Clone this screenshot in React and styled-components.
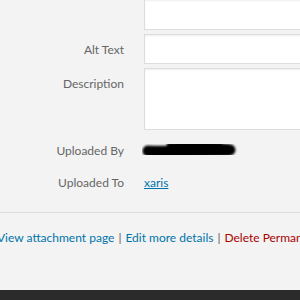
import React from "react";
import styled, { createGlobalStyle } from "styled-components";

const GlobalStyle = createGlobalStyle`
  html, body {
    margin: 0;
    padding: 0;
    background: #f3f3f3;
    overflow: hidden;
  }
  body {
    font-family: "Lato", "Noto Sans", sans-serif;
    font-size: 12px;
  }
`;

const Page = styled.div`
  width: 300px;
  height: 300px;
  display: flex;
  flex-direction: column;
  background: #f3f3f3;
  overflow: hidden;
`;

const Settings = styled.div`
  display: grid;
  grid-template-columns: 124px 200px;
  column-gap: 20px;
  row-gap: 4px;
`;

const Label = styled.label`
  text-align: right;
  color: #666;
  padding-top: ${({ $top }) => $top || 8}px;
  line-height: 16px;
`;

const Field = styled.div`
  box-sizing: border-box;
  height: ${({ $h }) => $h}px;
  background: #fff;
  border: 1px solid #ddd;
  border-top: ${({ $noTop }) => ($noTop ? "0" : "1px solid #ddd")};
  box-shadow: inset 0 1px 2px rgba(0, 0, 0, 0.07);
`;

const InfoRow = styled.div`
  display: grid;
  grid-template-columns: 124px 1fr;
  column-gap: 20px;
  height: 32px;
  align-items: center;
`;

const InfoLabel = styled.span`
  text-align: right;
  color: #666;
`;

const Value = styled.a`
  color: #0073aa;
  text-decoration: underline;
`;

const Info = styled.div`
  padding-top: 4px;
`;

const Divider = styled.hr`
  margin: 14px 0 0;
  border: 0;
  border-top: 1px solid #ddd;
  width: 100%;
`;

const Actions = styled.div`
  padding-top: 16px;
  line-height: 18px;
  white-space: nowrap;
  text-indent: -3px;
`;

const Action = styled.a`
  color: ${({ $danger }) => ($danger ? "#a00" : "#0073aa")};
  text-decoration: none;
`;

const Sep = styled.span`
  color: #555;
  padding: 0 4px;
`;

const Footer = styled.div`
  margin-top: auto;
  height: 10px;
  background: #2b2b2b;
`;

const Redacted = () => (
  <svg width="96" height="18" viewBox="0 0 96 18" style={{ marginLeft: -2 }}>
    <defs>
      <filter id="blur">
        <feGaussianBlur stdDeviation="0.9" />
      </filter>
    </defs>
    <g stroke="#000" strokeLinecap="round" fill="none" filter="url(#blur)">
      <path d="M6 10 C20 11, 35 10, 50 9 S78 7, 88 9" strokeWidth="11" />
      <path d="M28 5 C45 4, 60 4, 78 5" strokeWidth="7" />
      <path d="M9 12 C30 13, 55 12, 86 11" strokeWidth="8" />
    </g>
  </svg>
);

export default function App() {
  return (
    <>
      <GlobalStyle />
      <Page>
        <Settings>
          <span />
          <Field $h={30} $noTop />
          <Label>Alt Text</Label>
          <Field $h={30} />
          <Label>Description</Label>
          <Field $h={62} />
        </Settings>
        <Info>
          <InfoRow>
            <InfoLabel>Uploaded By</InfoLabel>
            <Redacted />
          </InfoRow>
          <InfoRow>
            <InfoLabel>Uploaded To</InfoLabel>
            <span>
              <Value href="#">xaris</Value>
            </span>
          </InfoRow>
        </Info>
        <Divider />
        <Actions>
          <Action href="#">View attachment page</Action>
          <Sep>|</Sep>
          <Action href="#">Edit more details</Action>
          <Sep>|</Sep>
          <Action href="#" $danger>
            Delete Permanently
          </Action>
        </Actions>
        <Footer />
      </Page>
    </>
  );
}
